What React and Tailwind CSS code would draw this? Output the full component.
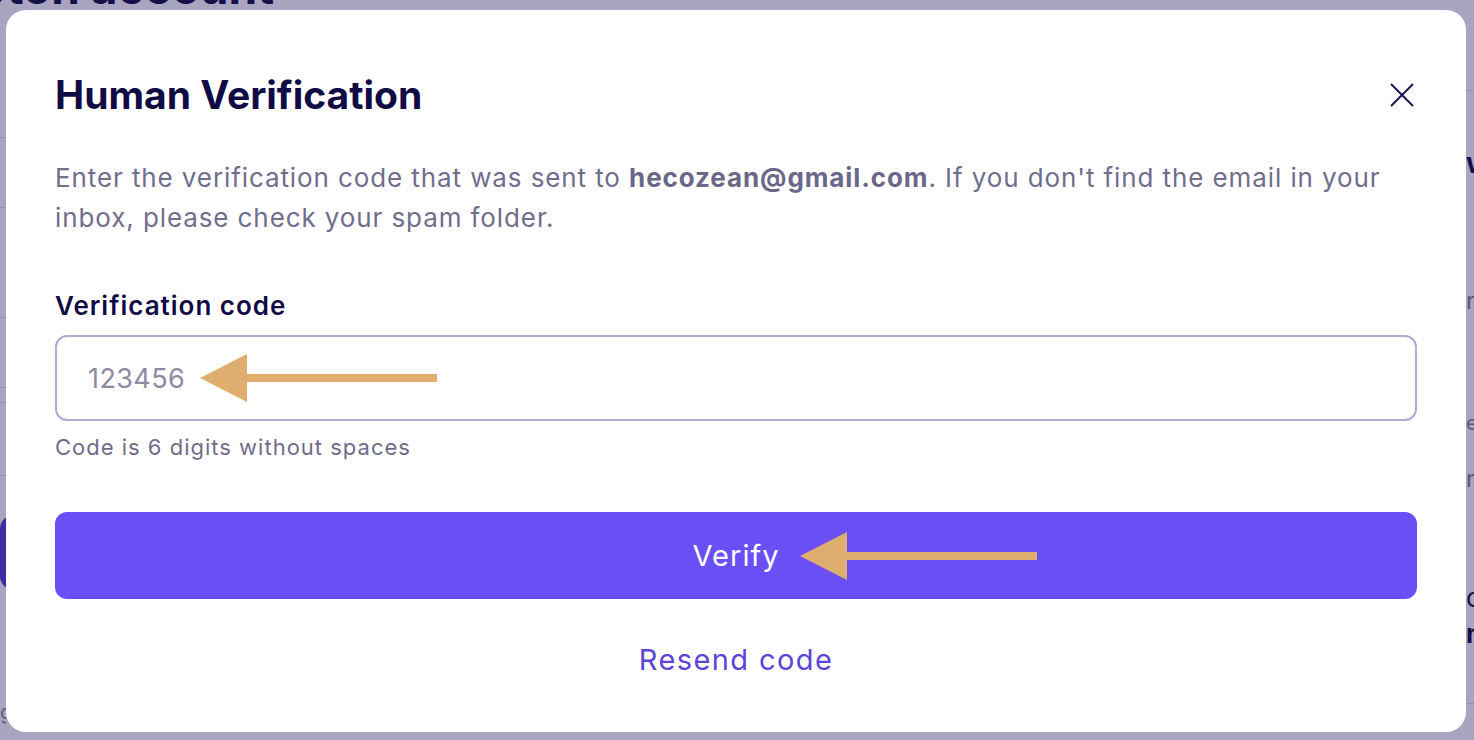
import { useState } from 'react';

function Arrow({ className }) {
  // orange annotation arrow pointing left
  return (
    <svg className={className} width="240" height="48" viewBox="0 0 240 48" fill="none">
      <polygon points="0,24 47,0 47,48" fill="#dfae6e" />
      <rect x="46" y="20" width="191" height="8" fill="#dfae6e" />
    </svg>
  );
}

function BackgroundPage() {
  return (
    <div className="flex h-full flex-col">
      <div className="-mt-[36px] flex w-[274px] justify-end whitespace-nowrap text-[46px] leading-none font-bold text-[#15104a]">
        <span>Create your Proton account</span>
      </div>
      <div className="flex flex-1 justify-between">
        <div className="flex w-[6px] flex-col overflow-hidden">
          <div className="mt-[127px] h-px bg-[#948fb0]" />
          <div className="mt-[69px] h-px bg-[#948fb0]" />
          <div className="mt-[109px] h-px bg-[#948fb0]" />
          <div className="mt-[69px] h-px bg-[#948fb0]" />
          <div className="mt-[14px] h-px bg-[#948fb0]" />
          <div className="mt-[72px] h-px bg-[#948fb0]" />
          <div className="mt-[39px] h-[75px] w-[14px] rounded-l-[14px] bg-[#3f2c9f]" />
          <div className="mt-[112px] text-[20px] leading-none text-[#5c5878]">g,</div>
        </div>
        <div className="flex w-[8px] flex-col overflow-hidden whitespace-nowrap">
          <div className="mt-[80px] h-px bg-[#948fb0]" />
          <div className="mt-[58px] text-[28px] leading-none font-bold text-[#15104a]">w</div>
          <div className="mt-[112px] text-[24px] leading-none text-[#5c5878]">r</div>
          <div className="mt-[100px] text-[20px] leading-none text-[#5c5878]">ea</div>
          <div className="mt-[34px] text-[24px] leading-none text-[#5c5878]">m</div>
          <div className="mt-[94px] text-[26px] leading-none text-[#15104a]">o</div>
          <div className="mt-[10px] text-[26px] leading-none font-bold text-[#15104a]">nl</div>
          <div className="mt-[56px] h-px bg-[#948fb0]" />
        </div>
      </div>
    </div>
  );
}

export default function App() {
  const [code, setCode] = useState('');

  return (
    <div className="relative h-[740px] w-[1474px] overflow-hidden bg-[#a9a5c1] font-['Inter','Noto_Sans',sans-serif]">
      <BackgroundPage />

      <div className="absolute inset-0 flex items-start pt-[10px] pl-[6px]">
        <div className="flex h-[722px] w-[1460px] flex-col rounded-[20px] bg-white px-[49px] pt-[61px] pb-[52px]">
          <div className="flex h-[48px] items-center justify-between">
            <h1 className="text-[39px] leading-[48px] font-bold text-[#100b45]">Human Verification</h1>
            <button className="mr-[3px] flex h-[24px] w-[24px] items-center justify-center">
              <svg width="24" height="24" viewBox="0 0 24 24" fill="none" stroke="#1a1450" strokeWidth="2">
                <path d="M1 1 23 23" />
                <path d="M23 1 1 23" />
              </svg>
            </button>
          </div>

          <p className="mt-[39px] text-[26px] leading-[40px] tracking-[0.9px] text-[#706d8d]">
            Enter the verification code that was sent to{' '}
            <span className="font-bold text-[#6a6788]">hecozean@gmail.com</span>. If you don't find
            the email in your inbox, please check your spam folder.
          </p>

          <label className="mt-[52px] text-[26px] leading-[32px] font-semibold tracking-[1px] text-[#100b45]">
            Verification code
          </label>
          <div className="relative mt-[13px]">
            <input
              value={code}
              onChange={(e) => setCode(e.target.value)}
              placeholder="123456"
              className="h-[86px] w-full rounded-[12px] border-2 border-[#b1acd0] px-[31px] text-[27px] tracking-[0.4px] text-[#100b45] outline-none placeholder:text-[#8d8aa4]"
            />
            <Arrow className="pointer-events-none absolute top-[19px] left-[145px]" />
          </div>
          <p className="mt-[12px] text-[22px] leading-[28px] tracking-[1px] text-[#6f6c8a]">
            Code is 6 digits without spaces
          </p>

          <button className="relative mt-[51px] flex h-[87px] w-full items-center justify-center rounded-[12px] bg-[#6a4ff7] text-[29px] tracking-[1px] text-white">
            Verify
            <Arrow className="pointer-events-none absolute top-[20px] left-[745px]" />
          </button>

          <button className="mt-[41px] self-center text-[29px] leading-[40px] tracking-[1.4px] text-[#5d44d9]">
            Resend code
          </button>
        </div>
      </div>
    </div>
  );
}
